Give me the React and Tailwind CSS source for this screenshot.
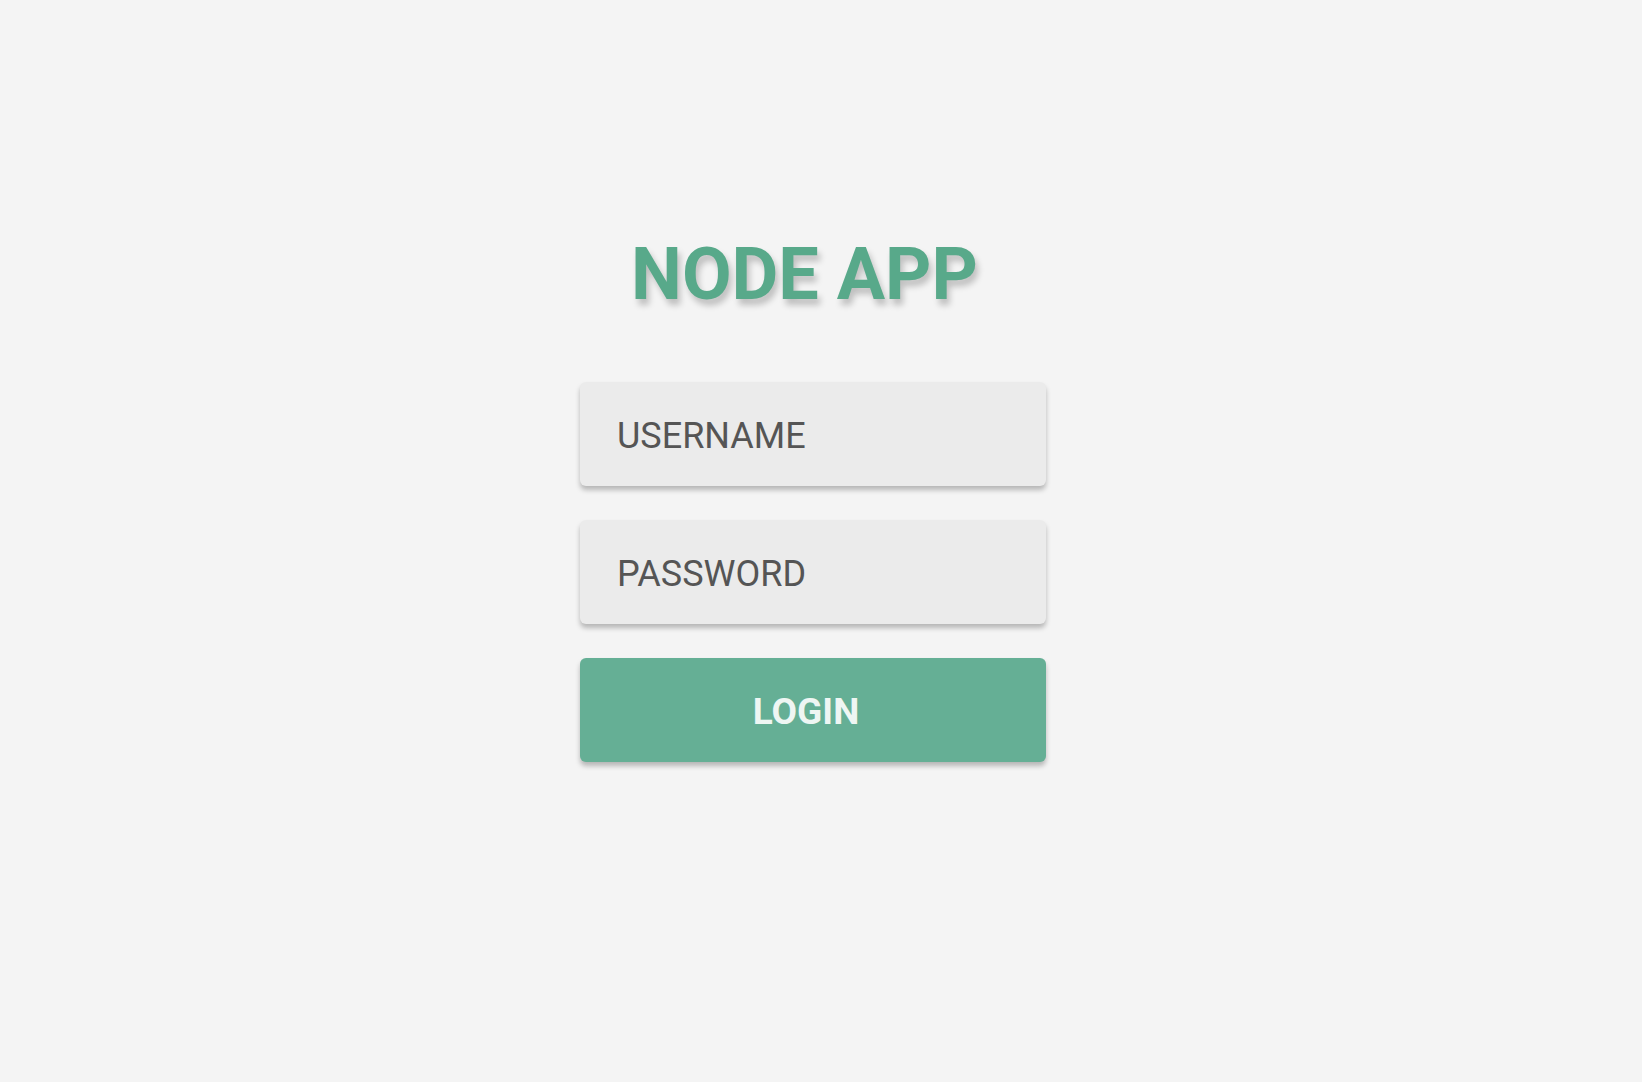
export default function App() {
  return (
    <div
      className="min-h-[1082px] w-full bg-[#f4f4f4] flex justify-center pr-[16px]"
      style={{ fontFamily: 'Roboto, "Liberation Sans", sans-serif' }}
    >
      <div className="w-[466px] pt-[239px] flex flex-col">
        <h1
          className="h-[72px] text-[72px] leading-none font-bold text-[#58a98a] text-center pr-[17px] [text-shadow:3px_6px_6px_rgba(0,0,0,0.22)]"
        >
          NODE APP
        </h1>
        <form className="mt-[71px] flex flex-col gap-[34px]" onSubmit={(e) => e.preventDefault()}>
          <input
            type="text"
            placeholder="USERNAME"
            className="h-[104px] w-full rounded-[6px] bg-[#ebebeb] px-[37px] pt-[4px] text-[36px] text-[#555] placeholder:text-[#555] outline-none shadow-[0_4px_5px_rgba(0,0,0,0.25)]"
          />
          <input
            type="password"
            placeholder="PASSWORD"
            className="h-[104px] w-full rounded-[6px] bg-[#ebebeb] px-[37px] pt-[4px] text-[36px] text-[#555] placeholder:text-[#555] outline-none shadow-[0_4px_5px_rgba(0,0,0,0.25)]"
          />
          <button
            type="submit"
            className="h-[104px] w-full rounded-[6px] bg-[#65af95] pr-[14px] pt-[4px] text-[37px] font-bold text-[#eef6f3] shadow-[0_4px_5px_rgba(0,0,0,0.25)]"
          >
            LOGIN
          </button>
        </form>
      </div>
    </div>
  );
}
